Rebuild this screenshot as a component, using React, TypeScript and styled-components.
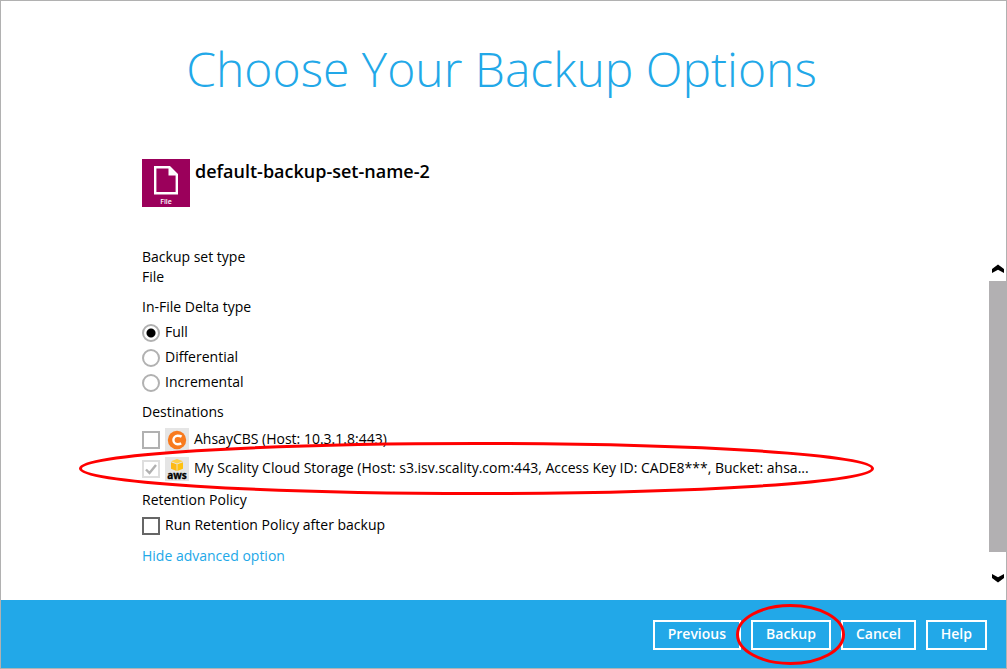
import React, { useState } from "react";
import styled, { createGlobalStyle } from "styled-components";

const BLUE = "#22a8e8";

const GlobalStyle = createGlobalStyle`
  *, *::before, *::after { box-sizing: border-box; }
  body {
    margin: 0;
    background: #fff;
    color: #000;
    font: 14px/20px "Open Sans", "Noto Sans", sans-serif;
  }
  button, input { font: inherit; }
`;

const Window = styled.div`
  display: flex;
  flex-direction: column;
  min-height: 100vh;
  border: 1px solid #b1b1b1;
  overflow: hidden;
`;

const Title = styled.h1`
  margin: 0;
  padding: 36px 20px 58px 16px;
  color: ${BLUE};
  font-size: 48px;
  line-height: 64px;
  font-weight: 300;
  text-align: center;
`;

const SetHeader = styled.header`
  display: flex;
  gap: 5px;
  padding: 0 141px;
`;

const FileTile = styled.svg`
  flex: none;
  width: 48px;
  height: 48px;
`;

const SetName = styled.h2`
  margin: 0;
  font-size: 18px;
  line-height: 24px;
  font-weight: 600;
`;

const Body = styled.main`
  display: flex;
  flex: 1;
  padding-top: 40px;
`;

const Options = styled.form`
  flex: 1;
  min-width: 0;
  padding: 0 141px 32px;
`;

const Group = styled.fieldset<{ $after?: number }>`
  margin: 0 0 ${(p) => p.$after ?? 10}px;
  padding: 0;
  border: 0;
  min-width: 0;
`;

const GroupTitle = styled.legend`
  padding: 0;
`;

const Value = styled.div``;

const OptionList = styled.div<{ $top: number; $gap: number }>`
  display: flex;
  flex-direction: column;
  align-items: flex-start;
  gap: ${(p) => p.$gap}px;
  padding-top: ${(p) => p.$top}px;
`;

const OptionLabel = styled.label`
  display: flex;
  align-items: flex-start;
  gap: 5px;
`;

const Radio = styled.input.attrs({ type: "radio" })`
  appearance: none;
  flex: none;
  width: 18px;
  height: 18px;
  margin: 2px 0 0;
  border: 2px solid #b1b1b1;
  border-radius: 50%;
  background: #fff;
  &:checked {
    background: radial-gradient(circle, #000 0 4px, #fff 5px);
  }
`;

const CheckHolder = styled.span`
  display: grid;
  flex: none;
  margin-top: 2px;
  > * { grid-area: 1 / 1; }
`;

const CheckBox = styled.input.attrs({ type: "checkbox" })<{ $edge: string }>`
  appearance: none;
  width: 18px;
  height: 18px;
  margin: 0;
  border: 2px solid ${(p) => p.$edge};
  background: #fff;
`;

const Tick = styled.svg`
  width: 18px;
  height: 18px;
  pointer-events: none;
`;

const DestinationRow = styled.div`
  position: relative;
  max-width: 100%;
`;

const DestinationLabel = styled.label`
  display: flex;
  align-items: center;
  gap: 5px;
  height: 24px;
  ${CheckHolder} { margin-top: 0; }
`;

const DestinationIcon = styled.svg`
  flex: none;
  width: 24px;
  height: 24px;
`;

const DestinationName = styled.span`
  padding-bottom: 2px;
  white-space: nowrap;
`;

const AdvancedLink = styled.a`
  color: ${BLUE};
  text-decoration: none;
`;

const ScrollBar = styled.div`
  display: flex;
  flex-direction: column;
  width: 17px;
  padding: 17px 0;
`;

const ScrollButton = styled.button`
  display: flex;
  justify-content: flex-end;
  padding: 0 2px 0 0;
  border: 0;
  background: none;
`;

const ScrollTrack = styled.div`
  flex: 1;
  padding: 7px 0 21px;
`;

const ScrollThumb = styled.div`
  height: 100%;
  background: #b2b0b2;
`;

const Footer = styled.footer`
  display: flex;
  justify-content: flex-end;
  gap: 10px;
  padding: 20px 19px 18px;
  background: ${BLUE};
`;

const ActionSlot = styled.div`
  position: relative;
`;

const Action = styled.button`
  display: block;
  height: 30px;
  padding: 0 13px 2px;
  border: 2px solid #fff;
  background: none;
  color: #fff;
  font-weight: 600;
  line-height: 20px;
`;

const Ring = styled.svg`
  position: absolute;
  z-index: 1;
  overflow: visible;
  pointer-events: none;
  fill: none;
  stroke: #f00;
  stroke-width: 3;
`;

const DestinationRing = styled(Ring)`
  left: -63px;
  top: -15px;
  width: 795px;
  height: 53px;
`;

const ActionRing = styled(Ring)`
  left: -15px;
  top: -16px;
  width: 109px;
  height: 61px;
`;

const deltaTypes = ["Full", "Differential", "Incremental"];

const CbsIcon = () => (
  <DestinationIcon viewBox="0 0 24 24" aria-hidden="true">
    <rect width="24" height="24" fill="#e5e5e5" />
    <circle cx="12" cy="12" r="9.2" fill="#f87a1e" />
    <path
      d="M16.6 8.6C15.4 7.9 14 7.8 12.6 7.8A4.2 4.2 0 0 0 12.6 16.2C14 16.2 15.2 16 16.2 15.4"
      fill="none"
      stroke="#fff"
      strokeWidth="2.4"
    />
  </DestinationIcon>
);

const AwsIcon = () => (
  <DestinationIcon viewBox="0 0 24 24" aria-hidden="true">
    <rect width="24" height="24" fill="#e5e5e5" />
    <path d="M6 4.3 12 2l6 2.3-6 2.2z" fill="#ffd044" />
    <path d="M6 5.2 11.6 7.2V14L6 11.8z" fill="#fdb913" />
    <path d="M18 5.2 12.4 7.2V14L18 11.8z" fill="#ffc20e" />
    <text
      x="12"
      y="22"
      textAnchor="middle"
      fontFamily="Open Sans, sans-serif"
      fontSize="10"
      fontWeight="700"
      stroke="#000"
      strokeWidth="0.3"
    >
      aws
    </text>
  </DestinationIcon>
);

export default function App() {
  const [delta, setDelta] = useState("Full");

  return (
    <Window>
      <GlobalStyle />
      <Title>Choose Your Backup Options</Title>
      <SetHeader>
        <FileTile viewBox="0 0 48 48" aria-hidden="true">
          <rect width="48" height="48" fill="#9b005b" />
          <path d="M13.2 8.2H27.5L34.8 15.5V34.2H13.2z" fill="none" stroke="#fff" strokeWidth="2.4" />
          <path d="M26.5 8V16.5H35z" fill="#fff" />
          <text
            x="24"
            y="45"
            textAnchor="middle"
            fill="#fff"
            fontFamily="Open Sans, sans-serif"
            fontSize="7"
            fontWeight="600"
          >
            File
          </text>
        </FileTile>
        <SetName>default-backup-set-name-2</SetName>
      </SetHeader>

      <Body>
        <Options>
          <Group>
            <GroupTitle>Backup set type</GroupTitle>
            <Value>File</Value>
          </Group>

          <Group>
            <GroupTitle>In-File Delta type</GroupTitle>
            <OptionList $top={5} $gap={5}>
              {deltaTypes.map((name) => (
                <OptionLabel key={name}>
                  <Radio
                    name="delta"
                    value={name}
                    checked={delta === name}
                    onChange={() => setDelta(name)}
                  />
                  {name}
                </OptionLabel>
              ))}
            </OptionList>
          </Group>

          <Group $after={9}>
            <GroupTitle>Destinations</GroupTitle>
            <OptionList $top={6} $gap={5}>
              <DestinationRow>
                <DestinationLabel>
                  <CheckHolder>
                    <CheckBox $edge="#b1b1b1" />
                  </CheckHolder>
                  <CbsIcon />
                  <DestinationName>AhsayCBS (Host: 10.3.1.8:443)</DestinationName>
                </DestinationLabel>
              </DestinationRow>
              <DestinationRow>
                <DestinationLabel>
                  <CheckHolder>
                    <CheckBox $edge="#dedede" defaultChecked disabled />
                    <Tick viewBox="0 0 18 18" aria-hidden="true">
                      <path d="M4 9.5 7.5 13 14 5" fill="none" stroke="#b1b1b1" strokeWidth="2.4" />
                    </Tick>
                  </CheckHolder>
                  <AwsIcon />
                  <DestinationName>
                    My Scality Cloud Storage (Host: s3.isv.scality.com:443, Access Key ID: CADE8***, Bucket: ahsa...
                  </DestinationName>
                </DestinationLabel>
                <DestinationRing viewBox="0 0 795 53" aria-hidden="true">
                  <ellipse cx="397.5" cy="26.5" rx="396" ry="25" />
                </DestinationRing>
              </DestinationRow>
            </OptionList>
          </Group>

          <Group $after={11}>
            <GroupTitle>Retention Policy</GroupTitle>
            <OptionList $top={5} $gap={5}>
              <OptionLabel>
                <CheckHolder>
                  <CheckBox $edge="#666" />
                </CheckHolder>
                Run Retention Policy after backup
              </OptionLabel>
            </OptionList>
          </Group>

          <AdvancedLink href="#advanced">Hide advanced option</AdvancedLink>
        </Options>

        <ScrollBar>
          <ScrollButton type="button" aria-label="Scroll up">
            <svg width="12" height="10" viewBox="0 0 12 10">
              <path d="M0 5 6 0.5 12 5V9L6 5.8 0 9z" />
            </svg>
          </ScrollButton>
          <ScrollTrack>
            <ScrollThumb />
          </ScrollTrack>
          <ScrollButton type="button" aria-label="Scroll down">
            <svg width="12" height="10" viewBox="0 0 12 10">
              <path d="M0 1 6 4.2 12 1V5L6 9.5 0 5z" />
            </svg>
          </ScrollButton>
        </ScrollBar>
      </Body>

      <Footer>
        <Action type="button">Previous</Action>
        <ActionSlot>
          <Action type="button">Backup</Action>
          <ActionRing viewBox="0 0 109 61" aria-hidden="true">
            <ellipse cx="54.5" cy="30.5" rx="53" ry="29" />
          </ActionRing>
        </ActionSlot>
        <Action type="button">Cancel</Action>
        <Action type="button">Help</Action>
      </Footer>
    </Window>
  );
}
